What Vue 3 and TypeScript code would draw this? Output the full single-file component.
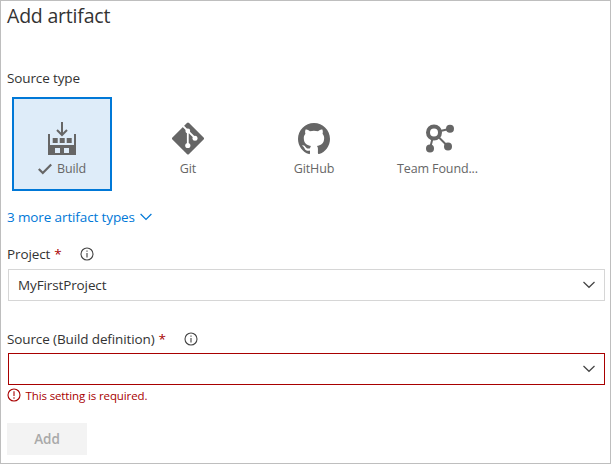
<script setup lang="ts">
import { ref } from 'vue'

interface SourceType {
  id: string
  label: string
}

const sourceTypes: SourceType[] = [
  { id: 'build', label: 'Build' },
  { id: 'git', label: 'Git' },
  { id: 'github', label: 'GitHub' },
  { id: 'tfvc', label: 'Team Found...' },
]
const selected = ref('build')
const project = ref('MyFirstProject')
</script>

<template>
  <main class="panel">
    <h1 class="title">Add artifact</h1>
    <div class="section-label">Source type</div>

    <div class="tiles">
      <div
        v-for="type in sourceTypes"
        :key="type.id"
        class="tile"
        :class="[type.id, { selected: selected === type.id }]"
        @click="selected = type.id"
      >
        <svg v-if="type.id === 'build'" class="tile-icon" viewBox="0 0 32 33">
          <path fill="#666" fill-rule="evenodd" d="M2 12h2v11h24V12h2v21H2zM9 26v5h5v-5zM18 26v5h5v-5z" />
          <path fill="#666" d="M6.700 16h5v5h-5zM13.700 16h5v5h-5zM20.700 16h5v5h-5z" />
          <path fill="none" stroke="#666" stroke-width="2" d="M16 0v13M11 8l5 5 5-5" />
        </svg>
        <svg v-else-if="type.id === 'git'" class="tile-icon" viewBox="0 0 32 33">
          <path fill="#666" stroke="#666" stroke-width="3" stroke-linejoin="round" d="M16 2L30.500 16.500 16 31 1.500 16.500z" />
          <path fill="none" stroke="#fff" stroke-width="1.800" d="M10.500 3.500l5.300 5.300L23 16M15.800 9v14" />
          <g fill="#fff">
            <circle cx="15.800" cy="9" r="2.400" />
            <circle cx="23" cy="16.200" r="2.500" />
            <circle cx="15.800" cy="23.500" r="2.600" />
          </g>
        </svg>
        <svg v-else-if="type.id === 'github'" class="tile-icon" viewBox="0 0 24 24.750">
          <path fill="#666" transform="translate(0 .4)" d="M12 .297c-6.630 0-12 5.373-12 12 0 5.303 3.438 9.800 8.205 11.385.6.113.82-.258.82-.577 0-.285-.01-1.040-.015-2.040-3.338.724-4.042-1.610-4.042-1.610C4.422 18.070 3.633 17.700 3.633 17.700c-1.087-.744.084-.729.084-.729 1.205.084 1.838 1.236 1.838 1.236 1.070 1.835 2.809 1.305 3.495.998.108-.776.417-1.305.76-1.605-2.665-.3-5.466-1.332-5.466-5.930 0-1.310.465-2.380 1.235-3.220-.135-.303-.54-1.523.105-3.176 0 0 1.005-.322 3.300 1.230.96-.267 1.980-.399 3-.405 1.020.006 2.040.138 3 .405 2.280-1.552 3.285-1.230 3.285-1.230.645 1.653.24 2.873.12 3.176.765.84 1.230 1.910 1.230 3.220 0 4.610-2.805 5.625-5.475 5.920.42.36.81 1.096.81 2.220 0 1.606-.015 2.896-.015 3.286 0 .315.21.69.825.57C20.565 22.092 24 17.592 24 12.297c0-6.627-5.373-12-12-12" />
        </svg>
        <svg v-else class="tile-icon" viewBox="0 0 32 33">
          <path fill="none" stroke="#666" stroke-width="2" d="M10 10.500L26 6.700M10 10.500L24 24.500M10 10.500L6 26.500" />
          <circle cx="10" cy="10.500" r="6" fill="#fff" stroke="#666" stroke-width="4" />
          <g fill="#666">
            <circle cx="26" cy="6.800" r="4" />
            <circle cx="24" cy="24.500" r="4" />
            <circle cx="6" cy="26.500" r="4" />
          </g>
        </svg>
        <div class="tile-caption">
          <svg v-if="selected === type.id" class="check" viewBox="0 0 14 12">
            <path fill="none" stroke="#666" stroke-width="2.200" d="M.8 6l4 4L13.200 1.500" />
          </svg>
          <span class="tile-text">{{ type.label }}</span>
        </div>
      </div>
    </div>

    <a class="more">
      <span class="more-text">3 more artifact types</span>
      <svg class="more-chevron" viewBox="0 0 12 8"><path d="M.6 1l5.400 5.500L11.400 1" /></svg>
    </a>

    <div class="field-label">
      <span class="project-label">Project</span><span class="star">*</span>
      <svg class="info" viewBox="0 0 14 14">
        <circle cx="7" cy="7" r="6" />
        <path d="M7 6v4.500M7 3.500v1.300" />
      </svg>
    </div>
    <div class="select">
      <span class="select-text">{{ project }}</span>
      <svg class="chevron" viewBox="0 0 12 8"><path d="M.5 1L6 6.300 11.500 1" /></svg>
    </div>

    <div class="field-label source">
      <span class="source-label">Source (Build definition)</span><span class="star">*</span>
      <svg class="info" viewBox="0 0 14 14">
        <circle cx="7" cy="7" r="6" />
        <path d="M7 6v4.500M7 3.500v1.300" />
      </svg>
    </div>
    <div class="select invalid">
      <svg class="chevron" viewBox="0 0 12 8"><path d="M.5 1L6 6.300 11.500 1" /></svg>
    </div>
    <div class="error">
      <svg class="error-icon" viewBox="0 0 14 14">
        <circle cx="7" cy="7" r="6" />
        <path d="M7 3.300v4.800M7 9.300v1.400" />
      </svg>
      <span class="error-text">This setting is required.</span>
    </div>

    <button class="add" disabled>Add</button>
  </main>
</template>

<style>
body {
  margin: 0;
  background: #fff;
}
</style>

<style scoped>
.panel {
  box-sizing: border-box;
  width: 611px;
  height: 464px;
  padding: 0 5px 0 6px;
  border: 1px solid #bebebe;
  overflow: hidden;
  font-family: 'Open Sans', 'Noto Sans', sans-serif;
  font-size: 13.5px;
  letter-spacing: -0.12px;
  color: #333;
  white-space: nowrap;
}
.title {
  margin: 0;
  height: 30px;
  line-height: 30px;
  font-size: 19.5px;
  font-weight: 400;
  letter-spacing: -0.2px;
}
.section-label {
  margin-top: 37px;
  height: 20px;
  line-height: 20px;
}
.tiles {
  display: flex;
  gap: 26px;
  margin: 9px 0 0 5px;
}
.tile {
  box-sizing: border-box;
  width: 100px;
  height: 94px;
  padding-top: 23px;
  border: 2px solid transparent;
  display: flex;
  flex-direction: column;
  align-items: center;
  color: #666;
}
.tile.selected {
  border-color: #0078d7;
  background: #deecf9;
}
.tile-icon {
  flex: none;
  width: 32px;
  height: 33px;
}
.tile-caption {
  display: flex;
  align-items: center;
  gap: 5px;
  height: 20px;
  margin-top: 4px;
  line-height: 20px;
  font-size: 12.5px;
}
.check {
  width: 14px;
  height: 12px;
}
.tfvc .tile-caption {
  margin-right: 5px;
}
.more {
  display: flex;
  align-items: center;
  gap: 5px;
  height: 20px;
  margin-top: 16px;
  color: #0078d7;
}
.more-chevron {
  width: 12px;
  height: 8px;
  fill: none;
  stroke: #0078d7;
  stroke-width: 1.200;
}
.field-label {
  display: flex;
  align-items: center;
  height: 20px;
  margin-top: 17px;
}
.field-label.source {
  margin-top: 28px;
}
.star {
  margin-left: 4px;
  color: #a80000;
}
.info {
  width: 14px;
  height: 14px;
  margin-left: 18px;
  fill: none;
  stroke: #444;
  stroke-width: 1.100;
}
.select {
  box-sizing: border-box;
  display: flex;
  align-items: center;
  width: 597px;
  height: 32px;
  margin: 5px 0 0 1px;
  padding: 0 9px;
  border: 1px solid #d6d6d6;
}
.select.invalid {
  margin-top: 4px;
  border-color: #a80000;
}
.chevron {
  width: 12px;
  height: 8px;
  margin-left: auto;
  fill: none;
  stroke: #444;
  stroke-width: 1.200;
}
.error {
  display: flex;
  align-items: center;
  height: 20px;
  gap: 5px;
  color: #a80000;
  font-size: 11.5px;
}
.error-icon {
  width: 14px;
  height: 14px;
  margin-left: -0.5px;
  fill: none;
  stroke: #a80000;
  stroke-width: 1.100;
}
.add {
  display: block;
  width: 80px;
  height: 32px;
  margin-top: 18px;
  padding: 0;
  border: 0;
  background: #f3f3f3;
  color: #a9a9a9;
  font: 600 13.5px/33px 'Open Sans', sans-serif;
}
</style>
